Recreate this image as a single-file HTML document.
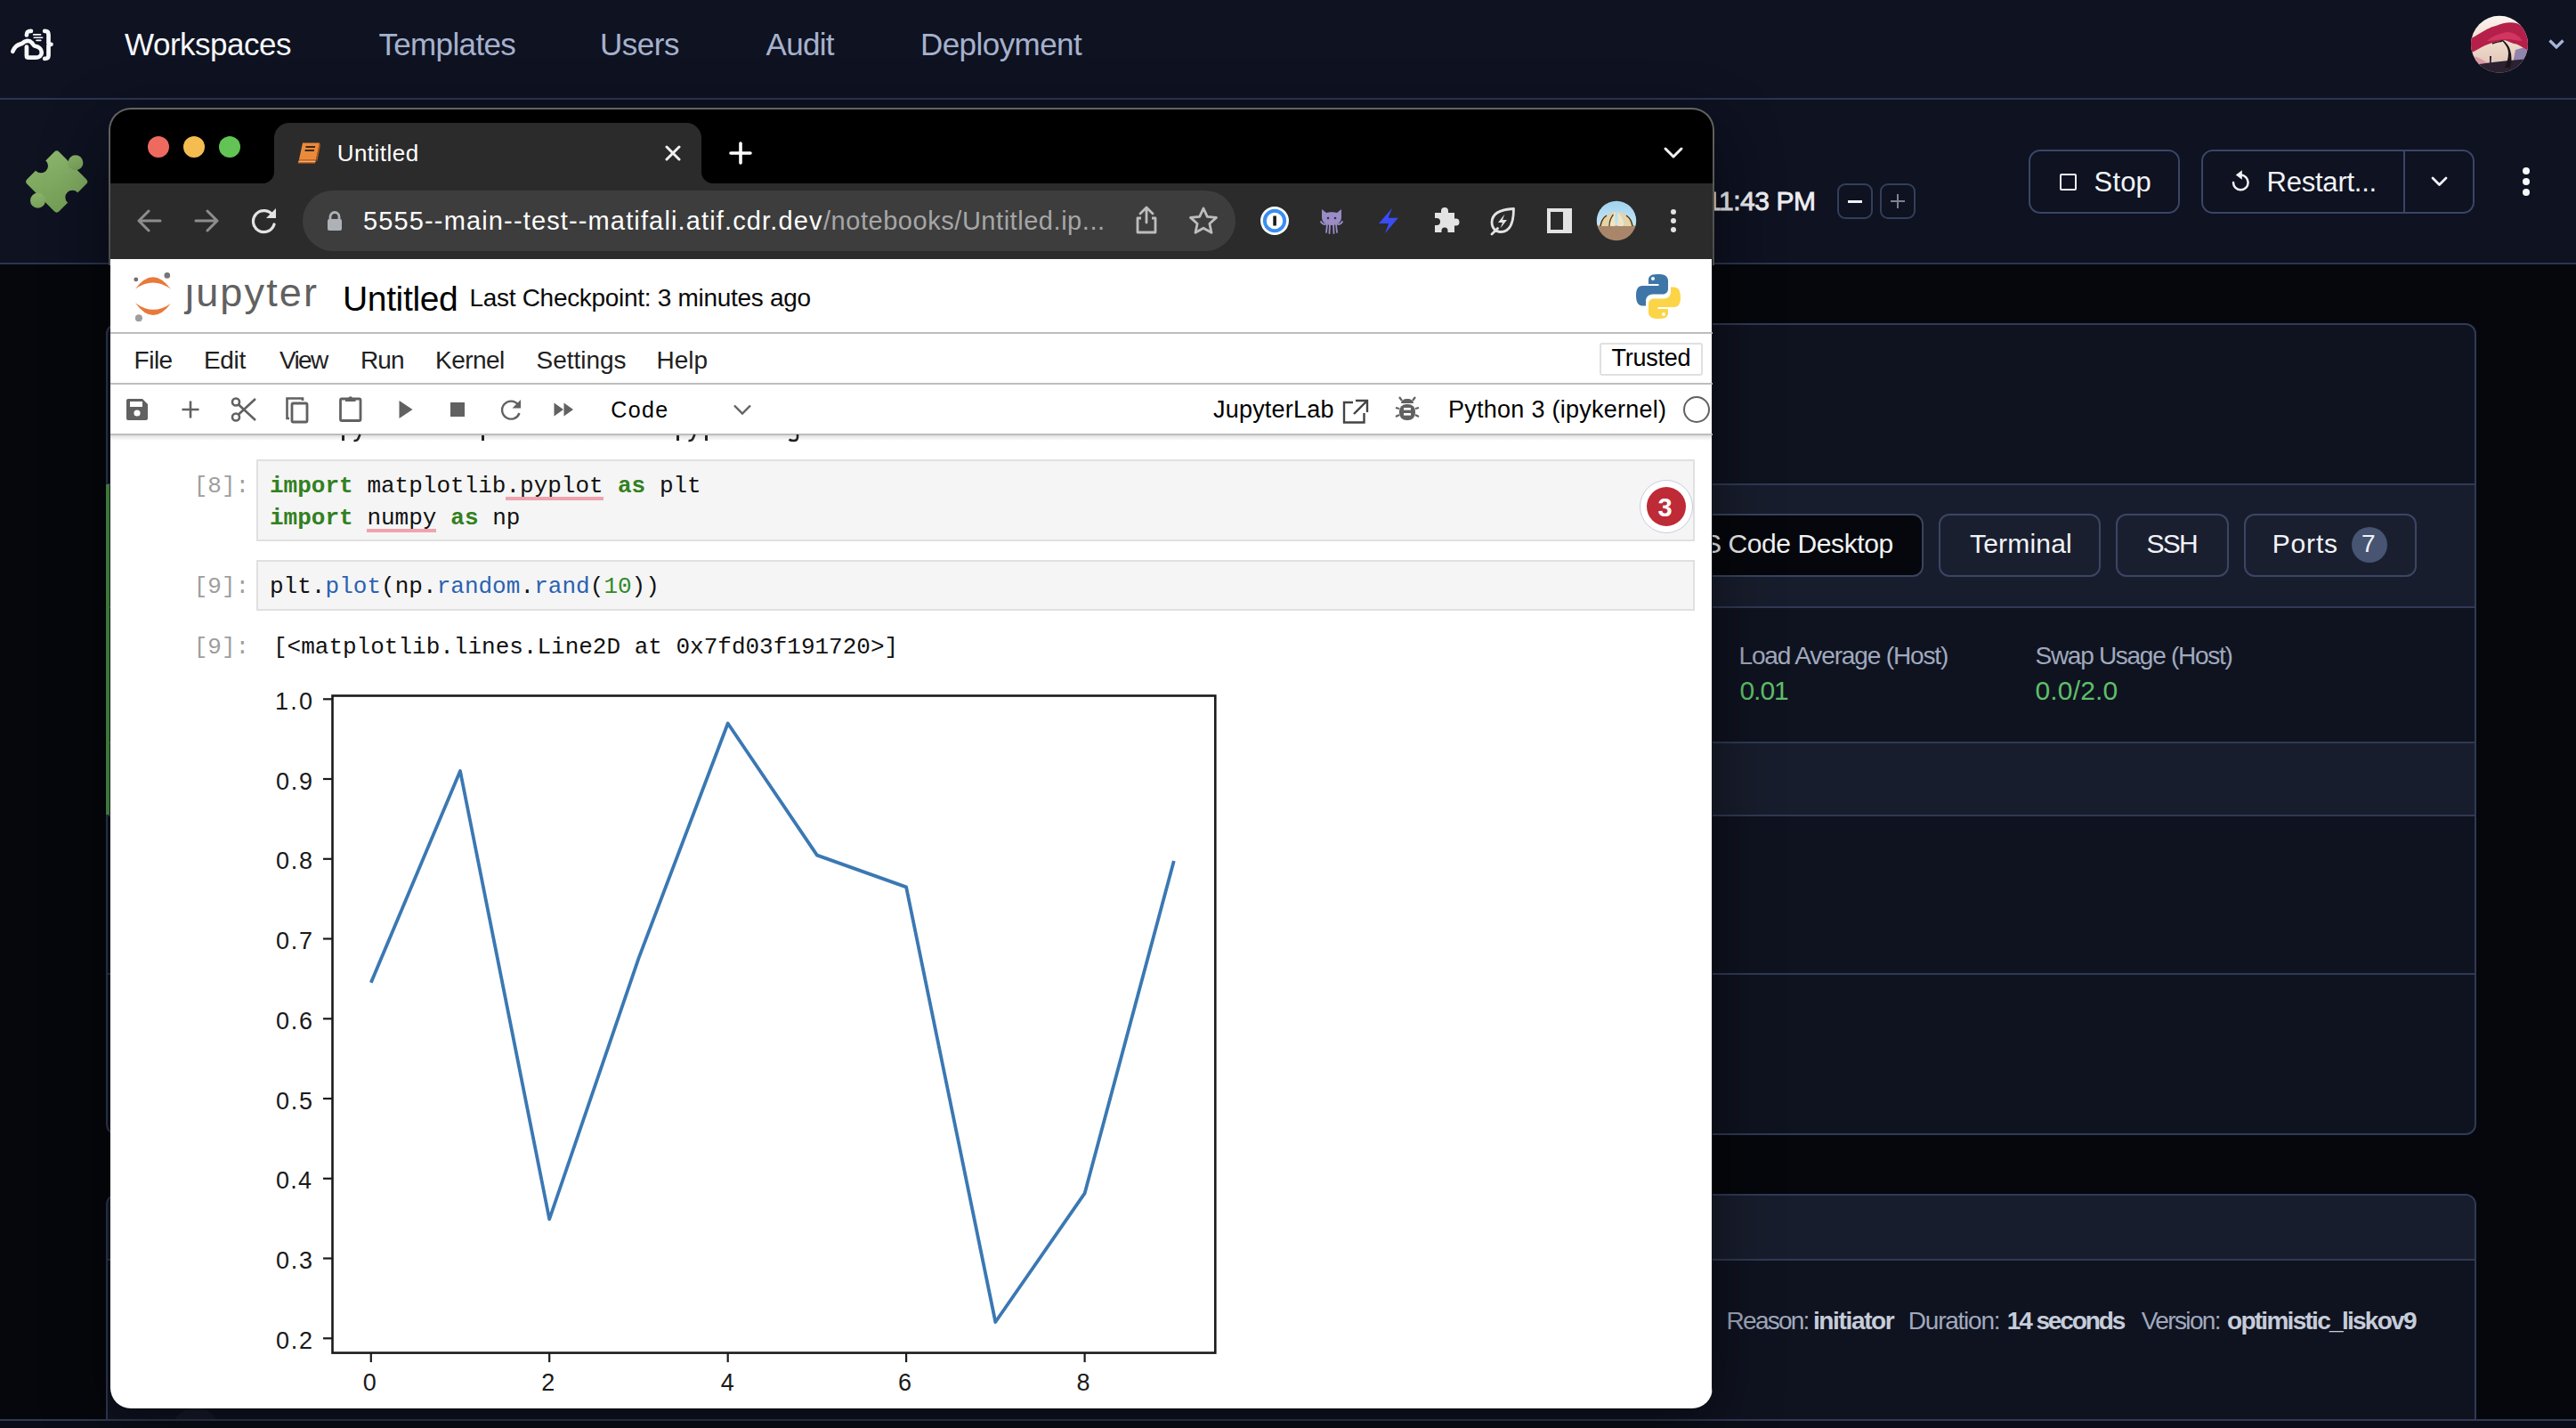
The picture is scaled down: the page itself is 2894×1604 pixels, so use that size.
<!DOCTYPE html>
<html><head><meta charset="utf-8">
<style>
html,body{margin:0;padding:0;}
body{width:2894px;height:1604px;overflow:hidden;position:relative;background:#05070c;font-family:"Liberation Sans", sans-serif;}
.a{position:absolute;}
.t{position:absolute;white-space:nowrap;line-height:1;}
svg.a{overflow:visible;}
</style></head><body>
<div class="a" style="left:0px;top:0px;width:2894px;height:110px;background:#0e1221;"></div>
<div class="a" style="left:0px;top:110px;width:2894px;height:2px;background:#2c3550;"></div>
<div class="a" style="left:0px;top:112px;width:2894px;height:183px;background:#0e1221;"></div>
<div class="a" style="left:0px;top:295px;width:2894px;height:2px;background:#2c3550;"></div>
<span class="t" style="left:140.0px;top:32.0px;font-size:35px;color:#f7f8fb;letter-spacing:-0.49px;">Workspaces</span>
<span class="t" style="left:425.4px;top:32.0px;font-size:35px;color:#a6b1cc;letter-spacing:-0.63px;">Templates</span>
<span class="t" style="left:674.0px;top:32.0px;font-size:35px;color:#a6b1cc;letter-spacing:-0.47px;">Users</span>
<span class="t" style="left:860.5px;top:32.0px;font-size:35px;color:#a6b1cc;letter-spacing:-0.71px;">Audit</span>
<span class="t" style="left:1034.0px;top:32.0px;font-size:35px;color:#a6b1cc;letter-spacing:-0.56px;">Deployment</span>
<svg class="a" style="left:0px;top:0px;" width="70" height="80" viewBox="0 0 70 80">
<g fill="none" stroke="#f7f8fb" stroke-width="4.7" stroke-linecap="round" stroke-linejoin="round">
<path d="M14.3 57.8 C15.5 54.5 18.5 50.5 23.5 49.4 C25.5 48.6 26.5 47.3 28 46.6 C30.5 45.6 33.8 45.8 35.8 48 C37 49.5 37.6 51.2 39.5 51.8 C43.5 52.5 46.8 55 46.8 59 C46.8 62.5 43.8 64.7 40 64.7 L32 64.7 C30.5 64.7 29.9 64 29.9 62.4 L29.9 52.5"/>
<path d="M34.9 34.9 C31 34.9 29.9 36 29.9 39.5"/>
<path d="M50.2 34.9 C53.5 34.9 54.5 36.2 54.5 39 L54.5 48.4 C54.5 49.3 55.5 49.8 57.5 49.8 M57.5 49.8 C55.5 49.8 54.5 50.3 54.5 51.2 L54.5 62 C54.5 64.8 53.5 65.9 50.2 65.9"/>
</g>
<g stroke="#f7f8fb" stroke-width="1.6" stroke-linecap="round">
<path d="M37.6 38.9 L45.6 38.9"/><path d="M38.2 42.3 L47.7 42.3"/><path d="M41 45.4 L45.8 45.4"/>
</g></svg>
<svg class="a" style="left:2774px;top:16px;" width="70" height="70" viewBox="0 0 70 70">
<defs><clipPath id="avc1"><circle cx="34" cy="33.8" r="32"/></clipPath>
<linearGradient id="avsky" x1="0" y1="0" x2="0" y2="1"><stop offset="0" stop-color="#fdf6f2"/><stop offset="0.55" stop-color="#ecd6c6"/><stop offset="1" stop-color="#d9b9b0"/></linearGradient></defs>
<g clip-path="url(#avc1)">
<rect x="0" y="0" width="70" height="70" fill="url(#avsky)"/>
<path d="M48 60 L52 40 L66 36 L70 60Z" fill="#9184ad"/>
<path d="M0 48 C8 46 14 50 22 56 L0 62Z" fill="#d99aa8"/>
<path d="M0 58 C20 54 44 52 70 50 L70 70 L0 70Z" fill="#2b2130"/>
<path d="M2 27 C10 24 20 15 30 13 C40 9 52 7 60 14 C66 20 68 30 66 40 C60 38 55 33 50 33 C44 31 40 28 36 30 C30 30 24 33 18 35 C12 38 6 42 0 44 Z" fill="#b4204a"/>
<path d="M20 30 C26 24 34 22 42 20 C50 20 56 24 60 30 C54 30 48 28 42 28 C36 28 28 30 20 30Z" fill="#d2355f"/>
<path d="M36 29 C40 33 44 37 44 44 C44 50 42 55 40 60 L46 60 C48 54 48 46 46 40 C45 36 42 32 38 29Z" fill="#1b1418"/>
<path d="M26 33 C30 31 34 31 37 30" fill="none" stroke="#1b1418" stroke-width="1.4"/>
<path d="M23 47 L25 47 L24.5 58 L23 58Z" fill="#2d2535"/>
</g></svg>
<svg class="a" style="left:2860px;top:40px;" width="24" height="20" viewBox="0 0 24 20"><path d="M4.5 5.5 L12 13 L19.5 5.5" fill="none" stroke="#a6b5d4" stroke-width="3.3" stroke-linecap="butt" stroke-linejoin="miter"/></svg>
<svg class="a" style="left:0px;top:150px;" width="130" height="110" viewBox="0 0 130 110">
<defs><linearGradient id="pz" x1="0" y1="0" x2="1" y2="1"><stop offset="0" stop-color="#8db66d"/><stop offset="1" stop-color="#74a056"/></linearGradient>
<mask id="pzm"><rect x="0" y="0" width="130" height="110" fill="#fff"/>
<g transform="translate(63.7 54) rotate(45)"><circle cx="-25" cy="0" r="8" fill="#000"/><circle cx="25" cy="0" r="8" fill="#000"/></g></mask></defs>
<g mask="url(#pzm)"><g transform="translate(63.7 54) rotate(45)" fill="url(#pz)">
<rect x="-25.5" y="-25.5" width="51" height="51" rx="4"/>
<circle cx="0" cy="-30" r="8.5"/>
<circle cx="0" cy="30" r="8.5"/>
</g></g>
</svg>
<span class="t" style="left:1917.0px;top:211.0px;font-size:30px;color:#eeeff3;letter-spacing:-0.46px;-webkit-text-stroke:0.8px #eeeff3;">11:43 PM</span>
<div class="a" style="left:2064px;top:206px;width:40px;height:40px;box-sizing:border-box;border:2px solid #33405a;border-radius:9px;"></div>
<div class="a" style="left:2076px;top:225px;width:16px;height:3px;background:#f2f3f6;"></div>
<div class="a" style="left:2112px;top:206px;width:40px;height:40px;box-sizing:border-box;border:2px solid #33405a;border-radius:9px;"></div>
<div class="a" style="left:2124px;top:225px;width:16px;height:2px;background:#7b8292;"></div>
<div class="a" style="left:2131px;top:218px;width:2px;height:16px;background:#7b8292;"></div>
<div class="a" style="left:2279px;top:168px;width:170px;height:72px;box-sizing:border-box;border:2px solid #3a4665;border-radius:13px;"></div>
<div class="a" style="left:2314px;top:195px;width:19px;height:19px;box-sizing:border-box;border:2.5px solid #f2f3f6;border-radius:2px;"></div>
<span class="t" style="left:2352.6px;top:189.3px;font-size:31px;color:#f2f3f6;letter-spacing:0.16px;">Stop</span>
<div class="a" style="left:2473px;top:168px;width:307px;height:72px;box-sizing:border-box;border:2px solid #3a4665;border-radius:13px;"></div>
<div class="a" style="left:2700px;top:168px;width:2px;height:72px;background:#3a4665;"></div>
<svg class="a" style="left:2503px;top:188px;" width="28" height="30" viewBox="0 0 28 30"><path d="M14.3 8.6 A8.3 8.3 0 1 1 6 16.9" fill="none" stroke="#f2f3f6" stroke-width="2.5" stroke-linecap="round"/><path d="M15.8 3.2 L15.8 13.8 L8.8 8.5 Z" fill="#f2f3f6"/></svg>
<span class="t" style="left:2546.6px;top:189.3px;font-size:31px;color:#f2f3f6;letter-spacing:-0.24px;">Restart...</span>
<svg class="a" style="left:2729px;top:195px;" width="24" height="18" viewBox="0 0 24 18"><path d="M4 5 L11.5 12.5 L19 5" fill="none" stroke="#f2f3f6" stroke-width="2.8" stroke-linecap="round" stroke-linejoin="round"/></svg>
<div class="a" style="left:2833.7px;top:187.7px;width:8.6px;height:8.6px;border-radius:50%;background:#f7f8fa;"></div>
<div class="a" style="left:2833.7px;top:199.7px;width:8.6px;height:8.6px;border-radius:50%;background:#f7f8fa;"></div>
<div class="a" style="left:2833.7px;top:211.7px;width:8.6px;height:8.6px;border-radius:50%;background:#f7f8fa;"></div>
<div class="a" style="left:119px;top:363px;width:2663px;height:912px;box-sizing:border-box;background:#0f1320;border:2px solid #303a55;border-radius:12px;"></div>
<div class="a" style="left:121px;top:543px;width:2659px;height:2px;background:#303a55;"></div>
<div class="a" style="left:121px;top:545px;width:2659px;height:136px;background:#181d2d;"></div>
<div class="a" style="left:121px;top:681px;width:2659px;height:2px;background:#303a55;"></div>
<div class="a" style="left:121px;top:833px;width:2659px;height:2px;background:#303a55;"></div>
<div class="a" style="left:121px;top:835px;width:2659px;height:80px;background:#181d2d;"></div>
<div class="a" style="left:121px;top:915px;width:2659px;height:2px;background:#303a55;"></div>
<div class="a" style="left:121px;top:1093px;width:2659px;height:2px;background:#303a55;"></div>
<div class="a" style="left:1700px;top:577px;width:461px;height:71px;box-sizing:border-box;background:#05070c;border:2px solid #38445f;border-radius:12px;"></div>
<span class="t" style="left:1894.4px;top:595.6px;font-size:30px;color:#f2f3f6;letter-spacing:-0.41px;">VS Code Desktop</span>
<div class="a" style="left:2178px;top:577px;width:182px;height:71px;box-sizing:border-box;background:#1a1f30;border:2px solid #3a4665;border-radius:12px;"></div>
<div class="a" style="left:2377px;top:577px;width:127px;height:71px;box-sizing:border-box;background:#1a1f30;border:2px solid #3a4665;border-radius:12px;"></div>
<div class="a" style="left:2521px;top:577px;width:194px;height:71px;box-sizing:border-box;background:#1a1f30;border:2px solid #3a4665;border-radius:12px;"></div>
<span class="t" style="left:2213.0px;top:595.6px;font-size:30px;color:#f2f3f6;letter-spacing:0.19px;">Terminal</span>
<span class="t" style="left:2411.6px;top:595.6px;font-size:30px;color:#f2f3f6;letter-spacing:-1.81px;">SSH</span>
<span class="t" style="left:2552.8px;top:595.6px;font-size:30px;color:#f2f3f6;letter-spacing:0.80px;">Ports</span>
<div class="a" style="left:2642px;top:592px;width:40px;height:40px;border-radius:20px;background:#475573;"></div>
<span class="t" style="left:2653.0px;top:597.3px;font-size:28px;color:#f2f3f6;">7</span>
<span class="t" style="left:1953.5px;top:722.5px;font-size:28px;color:#a0a9bd;letter-spacing:-1.14px;">Load Average (Host)</span>
<span class="t" style="left:1954.5px;top:761.0px;font-size:30px;color:#5fbf6a;letter-spacing:-1.07px;">0.01</span>
<span class="t" style="left:2286.5px;top:722.5px;font-size:28px;color:#a0a9bd;letter-spacing:-1.28px;">Swap Usage (Host)</span>
<span class="t" style="left:2286.5px;top:761.0px;font-size:30px;color:#5fbf6a;letter-spacing:0.16px;">0.0/2.0</span>
<div class="a" style="left:119px;top:1341px;width:2663px;height:299px;box-sizing:border-box;background:#0f1320;border:2px solid #303a55;border-radius:12px;"></div>
<div class="a" style="left:121px;top:1343px;width:2659px;height:71px;background:#181d2d;border-radius:10px 10px 0 0;"></div>
<div class="a" style="left:121px;top:1414px;width:2659px;height:2px;background:#303a55;"></div>
<span class="t" style="left:1939.6px;top:1469.6px;font-size:28px;color:#a0a9bd;letter-spacing:-1.75px;">Reason:</span>
<span class="t" style="left:2036.9px;top:1469.6px;font-size:28px;color:#c6ccd9;font-weight:700;letter-spacing:-1.35px;">initiator</span>
<span class="t" style="left:2143.8px;top:1469.6px;font-size:28px;color:#a0a9bd;letter-spacing:-1.23px;">Duration:</span>
<span class="t" style="left:2254.8px;top:1469.6px;font-size:28px;color:#c6ccd9;font-weight:700;letter-spacing:-2.11px;">14 seconds</span>
<span class="t" style="left:2405.8px;top:1469.6px;font-size:28px;color:#a0a9bd;letter-spacing:-1.63px;">Version:</span>
<span class="t" style="left:2502.0px;top:1469.6px;font-size:28px;color:#c6ccd9;font-weight:700;letter-spacing:-1.72px;">optimistic_liskov9</span>
<div class="a" style="left:193px;top:1581px;width:54px;height:54px;border-radius:50%;background:#161b29;"></div>
<div class="a" style="left:0px;top:1594px;width:2894px;height:2px;background:#303a55;"></div>
<div class="a" style="left:0px;top:1596px;width:2894px;height:8px;background:#0b0e18;"></div>
<div class="a" style="left:119px;top:544px;width:4px;height:371px;background:#4e9a4a;"></div>
<div class="a" style="left:124px;top:133px;width:1800px;height:1449px;border-radius:24px;box-shadow:0 16px 70px 6px rgba(0,0,0,0.42);"></div>
<div class="a" style="left:122px;top:121px;width:1804px;height:177px;border-radius:25px 25px 0 0;background:linear-gradient(#646464, #4a4a4a);"></div>
<div class="a" style="left:0;top:0;width:2894px;height:1604px;clip-path:inset(123px 970px 22px 124px round 23px);">
<div class="a" style="left:124px;top:123px;width:1800px;height:83px;background:#000;"></div>
<div class="a" style="left:124px;top:206px;width:1800px;height:85px;background:#2b2b2b;"></div>
<div class="a" style="left:124px;top:291px;width:1800px;height:1291px;background:#fff;"></div>
<div class="a" style="left:1923px;top:291px;width:1px;height:1291px;background:#1a1a1a;"></div>
<div class="a" style="left:166px;top:153px;width:24px;height:24px;border-radius:12px;background:#ee6a5f;"></div>
<div class="a" style="left:206px;top:153px;width:24px;height:24px;border-radius:12px;background:#f5bd4f;"></div>
<div class="a" style="left:246px;top:153px;width:24px;height:24px;border-radius:12px;background:#61c454;"></div>
<div class="a" style="left:308px;top:138px;width:480px;height:68px;background:#2b2b2b;border-radius:17px 17px 0 0;"></div>
<div class="a" style="left:295px;top:193px;width:13px;height:13px;background:radial-gradient(circle at 0 0, #000 12.5px, #2b2b2b 13.5px);"></div>
<div class="a" style="left:788px;top:193px;width:13px;height:13px;background:radial-gradient(circle at 100% 0, #000 12.5px, #2b2b2b 13.5px);"></div>
<svg class="a" style="left:330px;top:158px;" width="34" height="28" viewBox="0 0 34 28">
<path d="M10 2.5 L29 2.5 L25 21 L6 21 Z" fill="#ea8a3c"/>
<path d="M6 21 L25 21 L24 25.5 L4.5 25.5 Z" fill="#c8651f"/>
<path d="M25 21 L29 2.5 L30 5 L26.2 23.5 Z" fill="#b45a1b"/>
<path d="M5.5 23.3 L24.5 23.3" stroke="#f6c89a" stroke-width="1"/>
<path d="M13.5 7 L24 7 M12.6 11 L23 11" stroke="#3b2a18" stroke-width="2.2"/>
</svg>
<span class="t" style="left:378.7px;top:158.8px;font-size:26px;color:#ffffff;letter-spacing:0.47px;">Untitled</span>
<svg class="a" style="left:744px;top:160px;" width="24" height="24" viewBox="0 0 24 24"><path d="M5 5 L19 19 M19 5 L5 19" stroke="#f2f2f2" stroke-width="3" stroke-linecap="round"/></svg>
<svg class="a" style="left:818px;top:158px;" width="28" height="28" viewBox="0 0 28 28"><path d="M14 3 L14 25 M3 14 L25 14" stroke="#ffffff" stroke-width="3.6" stroke-linecap="round"/></svg>
<svg class="a" style="left:1868px;top:164px;" width="24" height="16" viewBox="0 0 24 16"><path d="M3 3 L12 12 L21 3" fill="none" stroke="#f2f2f2" stroke-width="3" stroke-linecap="round" stroke-linejoin="round"/></svg>
<svg class="a" style="left:150px;top:232px;" width="36" height="32" viewBox="0 0 36 32"><path d="M30 16 L6 16 M17 5 L6 16 L17 27" fill="none" stroke="#8d8d8d" stroke-width="3" stroke-linecap="round" stroke-linejoin="round"/></svg>
<svg class="a" style="left:215px;top:232px;" width="36" height="32" viewBox="0 0 36 32"><path d="M5 16 L29 16 M18 5 L29 16 L18 27" fill="none" stroke="#8d8d8d" stroke-width="3" stroke-linecap="round" stroke-linejoin="round"/></svg>
<svg class="a" style="left:280px;top:232px;" width="34" height="32" viewBox="0 0 34 32"><path d="M26.5 10 A12 12 0 1 0 28 20" fill="none" stroke="#e3e3e3" stroke-width="3.2" stroke-linecap="round"/><path d="M30 2 L30 13 L19 13 Z" fill="#e3e3e3"/></svg>
<div class="a" style="left:340px;top:214px;width:1048px;height:68px;border-radius:34px;background:#3d3d3d;"></div>
<svg class="a" style="left:366px;top:236px;" width="20" height="26" viewBox="0 0 20 26"><path d="M5 11 L5 7.5 A5 5 0 0 1 15 7.5 L15 11" fill="none" stroke="#aeb1b6" stroke-width="2.8"/><rect x="2" y="10" width="16" height="13" rx="2" fill="#aeb1b6"/></svg>
<span class="t" style="left:408.0px;top:234.0px;font-size:29px;color:#ffffff;letter-spacing:1.14px;">5555--main--test--matifali.atif.cdr.dev</span>
<span class="t" style="left:925.0px;top:234.0px;font-size:29px;color:#a6a6a6;letter-spacing:0.54px;">/notebooks/Untitled.ip...</span>
<svg class="a" style="left:1272px;top:230px;" width="32" height="36" viewBox="0 0 32 36"><path d="M16 4 L16 20 M9 10 L16 3 L23 10" fill="none" stroke="#bdbdbd" stroke-width="2.8" stroke-linecap="round" stroke-linejoin="round"/><path d="M10 15 L6 15 L6 31 L26 31 L26 15 L22 15" fill="none" stroke="#bdbdbd" stroke-width="2.8" stroke-linejoin="round"/></svg>
<svg class="a" style="left:1334px;top:231px;" width="36" height="34" viewBox="0 0 36 34"><path d="M18 3 L22.3 12.3 L32.5 13.4 L24.9 20.3 L27 30.3 L18 25.2 L9 30.3 L11.1 20.3 L3.5 13.4 L13.7 12.3 Z" fill="none" stroke="#bdbdbd" stroke-width="2.8" stroke-linejoin="round"/></svg>
<svg class="a" style="left:1414px;top:230px;" width="36" height="36" viewBox="0 0 36 36"><circle cx="18" cy="18" r="16" fill="#fff"/><circle cx="18" cy="18" r="11.2" fill="none" stroke="#3b8ef0" stroke-width="4"/><rect x="16.3" y="12.5" width="3.6" height="11" fill="#1a1a1a"/></svg>
<svg class="a" style="left:1480px;top:230px;" width="32" height="36" viewBox="0 0 32 36">
<path d="M5 5 L10 9 C13 8 19 8 22 9 L27 5 L27 14 C27 20 22 23 16 23 C10 23 5 20 5 14 Z" fill="#9a8cc4"/>
<circle cx="12" cy="15" r="1.3" fill="#3a2d5a"/><circle cx="20" cy="15" r="1.3" fill="#3a2d5a"/><path d="M14.8 17.5 L17.2 17.5 L16 19 Z" fill="#d77aa0"/>
<path d="M11 22 L10 31 M14 22 L13.5 32 M18 22 L18.5 32 M21 22 L22 31 M9 22 C6 22 5 21 4 19 M23 22 C26 22 27 21 28 19" fill="none" stroke="#9a8cc4" stroke-width="1.8" stroke-linecap="round"/></svg>
<svg class="a" style="left:1546px;top:230px;" width="28" height="36" viewBox="0 0 28 36"><path d="M18 3.7 L3 21 L14.2 21 L9.9 32.2 L24.8 14.8 L13.6 14.8 Z" fill="#3a4cf4"/></svg>
<svg class="a" style="left:1608px;top:230px;" width="34" height="34" viewBox="0 0 34 34"><path d="M4 9 L11 9 L11 7 A4 4 0 0 1 19 7 L19 9 L26 9 L26 15.5 L27.5 15.5 A4 4 0 0 1 27.5 23.5 L26 23.5 L26 31 L18.5 31 L18.5 29 A3.5 3.5 0 0 0 11.5 29 L11.5 31 L4 31 L4 23 L6 23 A4 4 0 0 0 6 15 L4 15 Z" fill="#e3e3e3"/></svg>
<svg class="a" style="left:1672px;top:232px;" width="34" height="34" viewBox="0 0 34 34"><path d="M28.5 2.5 C18 3 4 5 4 18 C4 24 8 28.5 14 28.5 C24 28.5 28.5 19 28.5 2.5 Z M4 31 L10.5 24.5" fill="none" stroke="#e3e3e3" stroke-width="2.8" stroke-linejoin="round" stroke-linecap="round"/><path d="M18.5 8.5 L11 18 L16 18 L13.5 24.5 L21 15 L16 15 Z" fill="#e3e3e3"/></svg>
<div class="a" style="left:1738px;top:234px;width:28px;height:28px;box-sizing:border-box;background:#e3e3e3;"></div>
<div class="a" style="left:1742px;top:238px;width:14px;height:20px;background:#2b2b2b;"></div>
<svg class="a" style="left:1793px;top:225px;" width="46" height="46" viewBox="0 0 46 46">
<defs><clipPath id="avc"><circle cx="23" cy="23" r="22.2"/></clipPath>
<linearGradient id="sky" x1="0" y1="0" x2="0" y2="1"><stop offset="0" stop-color="#9fd2f0"/><stop offset="1" stop-color="#c6e6f5"/></linearGradient></defs>
<g clip-path="url(#avc)">
<rect x="0" y="0" width="46" height="29" fill="url(#sky)"/>
<rect x="0" y="28.5" width="46" height="18" fill="#a9866a"/>
<path d="M5 29 C6 20 13 15 22 12 C16 17 14 23 14 29 Z" fill="#e7d3a4"/>
<path d="M41 29 C40 20 33 15 24 12 C30 17 32 23 32 29 Z" fill="#e7d3a4"/>
<path d="M15 29 C15 22 18 16 22 13 C21 19 21 24 21.5 29 Z" fill="#f3e4bd"/>
<path d="M31 29 C31 22 28 16 24 13 C25 19 25 24 24.5 29 Z" fill="#f3e4bd"/>
<path d="M5 29 C6 22 9 19 12 17" fill="none" stroke="#4a3416" stroke-width="1.5"/>
<path d="M41 29 C40 22 37 19 34 17" fill="none" stroke="#4a3416" stroke-width="1.5"/>
<path d="M15 29 C15 23 17 19 19.5 16" fill="none" stroke="#5a4020" stroke-width="1.3"/>
</g></svg>
<div class="a" style="left:1877px;top:234.8px;width:6.4px;height:6.4px;border-radius:50%;background:#e3e3e3;"></div>
<div class="a" style="left:1877px;top:244.8px;width:6.4px;height:6.4px;border-radius:50%;background:#e3e3e3;"></div>
<div class="a" style="left:1877px;top:254.8px;width:6.4px;height:6.4px;border-radius:50%;background:#e3e3e3;"></div>
<div class="a" style="left:124px;top:373px;width:1800px;height:2px;background:#bdbdbd;"></div>
<div class="a" style="left:124px;top:430px;width:1800px;height:2px;background:#bdbdbd;"></div>
<div class="a" style="left:124px;top:487px;width:1800px;height:2px;background:#bdbdbd;"></div>
<div class="a" style="left:124px;top:489px;width:1800px;height:6px;background:linear-gradient(rgba(0,0,0,0.12), rgba(0,0,0,0));"></div>
<svg class="a" style="left:140px;top:296px;" width="60" height="70" viewBox="0 0 60 70">
<path d="M12 28.6 Q31.7 1.8 51.8 28.6 Q31.7 14.2 12 28.6 Z" fill="#e8793a"/>
<path d="M12 44.2 Q31.7 71.4 51.8 45 Q31.7 59 12 44.2 Z" fill="#e8793a"/>
<circle cx="47.8" cy="13.4" r="3.3" fill="#767677"/>
<circle cx="12.8" cy="17.9" r="2.4" fill="#6f6f70"/>
<circle cx="15.9" cy="61.2" r="4" fill="#9e9e9e"/>
</svg>
<span class="t" style="left:208.0px;top:305.7px;font-size:45px;color:#616161;letter-spacing:2.15px;">jupyter</span>
<div class="a" style="left:208px;top:309px;width:11px;height:8.5px;background:#fff;"></div>
<span class="t" style="left:385.0px;top:315.5px;font-size:39px;color:#000000;letter-spacing:-0.36px;">Untitled</span>
<span class="t" style="left:527.5px;top:320.9px;font-size:28px;color:#0a0a0a;letter-spacing:-0.30px;">Last Checkpoint: 3 minutes ago</span>
<svg class="a" style="left:1838px;top:308px;" width="52" height="52" viewBox="0 0 52 52">
<g transform="scale(0.5)">
<path d="M48 0 C30 0 28 7 28 14 L28 22 L51 22 L51 26 L14 26 C5 26 0 33 0 48 C0 64 6 71 14 71 L22 71 L22 60 C22 51 29 45 38 45 L60 45 C67 45 72 40 72 33 L72 14 C72 7 66 1 58 0.5 C55 0 51 0 48 0 Z" fill="#3f76a8"/>
<circle cx="38" cy="10" r="4" fill="#fff"/>
<g transform="rotate(180 50 50)">
<path d="M48 0 C30 0 28 7 28 14 L28 22 L51 22 L51 26 L14 26 C5 26 0 33 0 48 C0 64 6 71 14 71 L22 71 L22 60 C22 51 29 45 38 45 L60 45 C67 45 72 40 72 33 L72 14 C72 7 66 1 58 0.5 C55 0 51 0 48 0 Z" fill="#fcd448"/>
<circle cx="38" cy="10" r="4" fill="#fff"/>
</g></g></svg>
<span class="t" style="left:150.6px;top:391.4px;font-size:28px;color:#212121;letter-spacing:-0.51px;">File</span>
<span class="t" style="left:229.0px;top:391.4px;font-size:28px;color:#212121;letter-spacing:-0.32px;">Edit</span>
<span class="t" style="left:314.0px;top:391.4px;font-size:28px;color:#212121;letter-spacing:-1.65px;">View</span>
<span class="t" style="left:405.0px;top:391.4px;font-size:28px;color:#212121;letter-spacing:-0.90px;">Run</span>
<span class="t" style="left:489.0px;top:391.4px;font-size:28px;color:#212121;letter-spacing:-0.54px;">Kernel</span>
<span class="t" style="left:602.5px;top:391.4px;font-size:28px;color:#212121;letter-spacing:-0.02px;">Settings</span>
<span class="t" style="left:737.5px;top:391.4px;font-size:28px;color:#212121;letter-spacing:-0.00px;">Help</span>
<div class="a" style="left:1797px;top:385px;width:116px;height:37px;box-sizing:border-box;border:2px solid #e0e0e0;border-radius:3px;"></div>
<span class="t" style="left:1810.6px;top:388.8px;font-size:27px;color:#000000;letter-spacing:-0.25px;">Trusted</span>
<svg class="a" style="left:140px;top:446px;" width="28" height="28" viewBox="0 0 28 28"><path d="M4 2 L20 2 L26 8 L26 24 A2 2 0 0 1 24 26 L4 26 A2 2 0 0 1 2 24 L2 4 A2 2 0 0 1 4 2 Z" fill="#616161"/><rect x="6" y="5" width="14" height="6" fill="#fff"/><circle cx="14" cy="18" r="3.6" fill="#fff"/></svg>
<svg class="a" style="left:202px;top:448px;" width="24" height="24" viewBox="0 0 24 24"><path d="M12 2.5 L12 21.5 M2.5 12 L21.5 12" stroke="#616161" stroke-width="2.6"/></svg>
<svg class="a" style="left:258px;top:444px;" width="32" height="32" viewBox="0 0 32 32"><circle cx="7" cy="7.5" r="4" fill="none" stroke="#616161" stroke-width="2.6"/><circle cx="7" cy="24.5" r="4" fill="none" stroke="#616161" stroke-width="2.6"/><path d="M10 10.5 L29 28 M10 21.5 L29 4" stroke="#616161" stroke-width="2.6"/></svg>
<svg class="a" style="left:318px;top:444px;" width="32" height="34" viewBox="0 0 32 34"><path d="M7 26 L4.5 26 L4.5 3.5 L22 3.5 L22 6" fill="none" stroke="#616161" stroke-width="2.6"/><rect x="10" y="9" width="17" height="21" rx="1.5" fill="none" stroke="#616161" stroke-width="2.8"/></svg>
<svg class="a" style="left:379px;top:442px;" width="30" height="34" viewBox="0 0 30 34"><rect x="3.5" y="6" width="22.5" height="24.5" rx="1.5" fill="none" stroke="#616161" stroke-width="2.8"/><path d="M9 5 L9 9 L20.5 9 L20.5 5 L17 5 A2.3 2.3 0 0 0 12.5 5 Z" fill="#616161"/></svg>
<svg class="a" style="left:446px;top:448px;" width="20" height="24" viewBox="0 0 20 24"><path d="M2.5 2 L17.5 12 L2.5 22 Z" fill="#616161"/></svg>
<div class="a" style="left:506px;top:452px;width:16px;height:16px;background:#616161;"></div>
<svg class="a" style="left:560px;top:446px;" width="30" height="28" viewBox="0 0 30 28"><path d="M22 8.5 A10 10 0 1 0 23.5 18" fill="none" stroke="#616161" stroke-width="2.4"/><path d="M25 3 L25 12.5 L15.5 12.5 Z" fill="#616161"/></svg>
<svg class="a" style="left:620px;top:450px;" width="30" height="20" viewBox="0 0 30 20"><path d="M2.5 2.5 L13 10 L2.5 17.5 Z M13.5 2.5 L24 10 L13.5 17.5 Z" fill="#616161"/></svg>
<span class="t" style="left:686.3px;top:447.8px;font-size:25px;color:#000000;letter-spacing:1.38px;">Code</span>
<svg class="a" style="left:822px;top:452px;" width="24" height="18" viewBox="0 0 24 18"><path d="M3 3.5 L12 12.5 L21 3.5" fill="none" stroke="#616161" stroke-width="2.4"/></svg>
<span class="t" style="left:1363.0px;top:447.1px;font-size:27px;color:#000000;letter-spacing:0.21px;">JupyterLab</span>
<svg class="a" style="left:1506px;top:446px;" width="34" height="32" viewBox="0 0 34 32"><path d="M14 6 L4 6 L4 28.5 L26.5 28.5 L26.5 18" fill="none" stroke="#444" stroke-width="2.4"/><path d="M17 4 L30 4 L30 17 M30 4 L15 19" fill="none" stroke="#444" stroke-width="2.4"/></svg>
<svg class="a" style="left:1566px;top:444px;" width="30" height="32" viewBox="0 0 30 32"><path d="M8 9 C8 6 11 4 15 4 C19 4 22 6 22 9 Z" fill="#616161"/><rect x="6" y="10" width="18" height="18" rx="8" fill="#616161"/>
<path d="M9 6 L6 2 M21 6 L24 2 M6 15 L2 14 M24 15 L28 14 M6 22 L2 24 M24 22 L28 24" stroke="#616161" stroke-width="2.2"/>
<rect x="11" y="14" width="8" height="2.6" fill="#fff"/><rect x="11" y="20" width="8" height="2.6" fill="#fff"/></svg>
<span class="t" style="left:1627.0px;top:447.1px;font-size:27px;color:#000000;letter-spacing:0.26px;">Python 3 (ipykernel)</span>
<div class="a" style="left:1891px;top:445px;width:30px;height:30px;box-sizing:border-box;border:2.6px solid #616161;border-radius:50%;"></div>
<div class="a" style="left:384.0px;top:489px;width:3.0px;height:5.5px;background:#222;"></div>
<div class="a" style="left:540.8px;top:489px;width:3.0px;height:5.5px;background:#222;"></div>
<div class="a" style="left:759.9px;top:489px;width:3.0px;height:5.5px;background:#222;"></div>
<div class="a" style="left:791.9px;top:489px;width:3.0px;height:5.5px;background:#222;"></div>
<svg class="a" style="left:395.8px;top:488px;" width="12" height="8" viewBox="0 0 12 8"><path d="M8.5 0 L6 5.5 C5 7 3.5 7.2 1.5 7" fill="none" stroke="#222" stroke-width="2.6"/></svg>
<svg class="a" style="left:772px;top:488px;" width="12" height="8" viewBox="0 0 12 8"><path d="M8.5 0 L6 5.5 C5 7 3.5 7.2 1.5 7" fill="none" stroke="#222" stroke-width="2.6"/></svg>
<svg class="a" style="left:885px;top:488px;" width="14" height="8" viewBox="0 0 14 8"><path d="M11 0 L11 3 C11 6 9 7 6.5 7 C4 7 2.5 6.5 1.5 5.5" fill="none" stroke="#222" stroke-width="2.6"/></svg>
<div class="a" style="left:288px;top:516px;width:1616px;height:92px;box-sizing:border-box;background:#f5f5f5;border:2px solid #e0e0e0;"></div>
<div class="a" style="left:288px;top:629px;width:1616px;height:57px;box-sizing:border-box;background:#f5f5f5;border:2px solid #e0e0e0;"></div>
<span class="t" style="left:217.7px;top:533.1px;font-size:26px;color:#9e9e9e;font-family:'Liberation Mono', monospace;">[8]:</span>
<span class="t" style="left:217.7px;top:646.1px;font-size:26px;color:#9e9e9e;font-family:'Liberation Mono', monospace;">[9]:</span>
<span class="t" style="left:217.7px;top:714.1px;font-size:26px;color:#9e9e9e;font-family:'Liberation Mono', monospace;">[9]:</span>
<span class="t" style="left:303.0px;top:533.1px;font-size:26px;color:#33801f;font-weight:700;font-family:'Liberation Mono', monospace;">import</span>
<span class="t" style="left:396.8px;top:533.1px;font-size:26px;color:#111;font-family:'Liberation Mono', monospace;">&nbsp;matplotlib.pyplot&nbsp;</span>
<span class="t" style="left:694.0px;top:533.1px;font-size:26px;color:#33801f;font-weight:700;font-family:'Liberation Mono', monospace;">as</span>
<span class="t" style="left:725.3px;top:533.1px;font-size:26px;color:#111;font-family:'Liberation Mono', monospace;">&nbsp;plt</span>
<span class="t" style="left:303.0px;top:569.1px;font-size:26px;color:#33801f;font-weight:700;font-family:'Liberation Mono', monospace;">import</span>
<span class="t" style="left:396.8px;top:569.1px;font-size:26px;color:#111;font-family:'Liberation Mono', monospace;">&nbsp;numpy&nbsp;</span>
<span class="t" style="left:506.3px;top:569.1px;font-size:26px;color:#33801f;font-weight:700;font-family:'Liberation Mono', monospace;">as</span>
<span class="t" style="left:537.6px;top:569.1px;font-size:26px;color:#111;font-family:'Liberation Mono', monospace;">&nbsp;np</span>
<div class="a" style="left:412px;top:593.5px;width:78px;height:4.5px;background:#f0a3ae;"></div>
<div class="a" style="left:568px;top:557.5px;width:110px;height:4.5px;background:#f0a3ae;"></div>
<span class="t" style="left:303.0px;top:646.1px;font-size:26px;color:#111;font-family:'Liberation Mono', monospace;">plt.</span>
<span class="t" style="left:365.6px;top:646.1px;font-size:26px;color:#2a62b0;font-family:'Liberation Mono', monospace;">plot</span>
<span class="t" style="left:428.1px;top:646.1px;font-size:26px;color:#111;font-family:'Liberation Mono', monospace;">(np.</span>
<span class="t" style="left:490.7px;top:646.1px;font-size:26px;color:#2a62b0;font-family:'Liberation Mono', monospace;">random</span>
<span class="t" style="left:584.5px;top:646.1px;font-size:26px;color:#111;font-family:'Liberation Mono', monospace;">.</span>
<span class="t" style="left:600.2px;top:646.1px;font-size:26px;color:#2a62b0;font-family:'Liberation Mono', monospace;">rand</span>
<span class="t" style="left:662.7px;top:646.1px;font-size:26px;color:#111;font-family:'Liberation Mono', monospace;">(</span>
<span class="t" style="left:678.4px;top:646.1px;font-size:26px;color:#2f8a2a;font-family:'Liberation Mono', monospace;">10</span>
<span class="t" style="left:709.6px;top:646.1px;font-size:26px;color:#111;font-family:'Liberation Mono', monospace;">))</span>
<span class="t" style="left:307.0px;top:714.1px;font-size:26px;color:#111;font-family:'Liberation Mono', monospace;">[&lt;matplotlib.lines.Line2D&nbsp;at&nbsp;0x7fd03f191720&gt;]</span>
<div class="a" style="left:1842px;top:539px;width:60px;height:60px;box-sizing:border-box;border-radius:50%;background:#fff;border:1.5px solid #c9ccdc;"></div>
<div class="a" style="left:1850px;top:547px;width:44px;height:44px;border-radius:50%;background:#be2a36;"></div>
<span class="t" style="left:1862.5px;top:556.4px;font-size:29px;color:#ffffff;font-weight:700;">3</span>
<svg class="a" style="left:0;top:0" width="2894" height="1604"><rect x="373.5" y="781.5" width="991.8" height="738.0999999999999" fill="none" stroke="#1a1a1a" stroke-width="2.6"/><polyline points="416.8,1103.7 517.0,866.0 617.2,1369.5 717.5,1076.3 817.7,812.5 917.9,960.6 1018.1,996.4 1118.3,1485.0 1218.6,1340.4 1318.8,967.0" fill="none" stroke="#3a78b3" stroke-width="3.8" stroke-linejoin="round" stroke-linecap="butt"/><line x1="363.0" y1="1503.3" x2="373.5" y2="1503.3" stroke="#1a1a1a" stroke-width="2.2"/><line x1="363.0" y1="1413.5" x2="373.5" y2="1413.5" stroke="#1a1a1a" stroke-width="2.2"/><line x1="363.0" y1="1323.8" x2="373.5" y2="1323.8" stroke="#1a1a1a" stroke-width="2.2"/><line x1="363.0" y1="1234.0" x2="373.5" y2="1234.0" stroke="#1a1a1a" stroke-width="2.2"/><line x1="363.0" y1="1144.3" x2="373.5" y2="1144.3" stroke="#1a1a1a" stroke-width="2.2"/><line x1="363.0" y1="1054.5" x2="373.5" y2="1054.5" stroke="#1a1a1a" stroke-width="2.2"/><line x1="363.0" y1="964.8" x2="373.5" y2="964.8" stroke="#1a1a1a" stroke-width="2.2"/><line x1="363.0" y1="875.0" x2="373.5" y2="875.0" stroke="#1a1a1a" stroke-width="2.2"/><line x1="363.0" y1="785.3" x2="373.5" y2="785.3" stroke="#1a1a1a" stroke-width="2.2"/><line x1="416.8" y1="1519.6" x2="416.8" y2="1530.1" stroke="#1a1a1a" stroke-width="2.2"/><line x1="617.2" y1="1519.6" x2="617.2" y2="1530.1" stroke="#1a1a1a" stroke-width="2.2"/><line x1="817.7" y1="1519.6" x2="817.7" y2="1530.1" stroke="#1a1a1a" stroke-width="2.2"/><line x1="1018.1" y1="1519.6" x2="1018.1" y2="1530.1" stroke="#1a1a1a" stroke-width="2.2"/><line x1="1218.6" y1="1519.6" x2="1218.6" y2="1530.1" stroke="#1a1a1a" stroke-width="2.2"/></svg>
<span class="t" style="left:310.0px;top:1492.9px;font-size:27px;color:#1a1a1a;letter-spacing:1.74px;">0.2</span>
<span class="t" style="left:310.0px;top:1403.2px;font-size:27px;color:#1a1a1a;letter-spacing:1.74px;">0.3</span>
<span class="t" style="left:310.0px;top:1313.4px;font-size:27px;color:#1a1a1a;letter-spacing:1.24px;">0.4</span>
<span class="t" style="left:310.0px;top:1223.7px;font-size:27px;color:#1a1a1a;letter-spacing:1.74px;">0.5</span>
<span class="t" style="left:310.0px;top:1133.9px;font-size:27px;color:#1a1a1a;letter-spacing:1.74px;">0.6</span>
<span class="t" style="left:310.0px;top:1044.2px;font-size:27px;color:#1a1a1a;letter-spacing:1.74px;">0.7</span>
<span class="t" style="left:310.0px;top:954.4px;font-size:27px;color:#1a1a1a;letter-spacing:1.74px;">0.8</span>
<span class="t" style="left:310.0px;top:864.7px;font-size:27px;color:#1a1a1a;letter-spacing:1.74px;">0.9</span>
<span class="t" style="left:309.0px;top:774.9px;font-size:27px;color:#1a1a1a;letter-spacing:2.24px;">1.0</span>
<span class="t" style="left:407.8px;top:1539.9px;font-size:27px;color:#1a1a1a;">0</span>
<span class="t" style="left:608.2px;top:1539.9px;font-size:27px;color:#1a1a1a;">2</span>
<span class="t" style="left:809.7px;top:1539.9px;font-size:27px;color:#1a1a1a;">4</span>
<span class="t" style="left:1009.1px;top:1539.9px;font-size:27px;color:#1a1a1a;">6</span>
<span class="t" style="left:1209.6px;top:1539.9px;font-size:27px;color:#1a1a1a;">8</span>
</div>
</body></html>
